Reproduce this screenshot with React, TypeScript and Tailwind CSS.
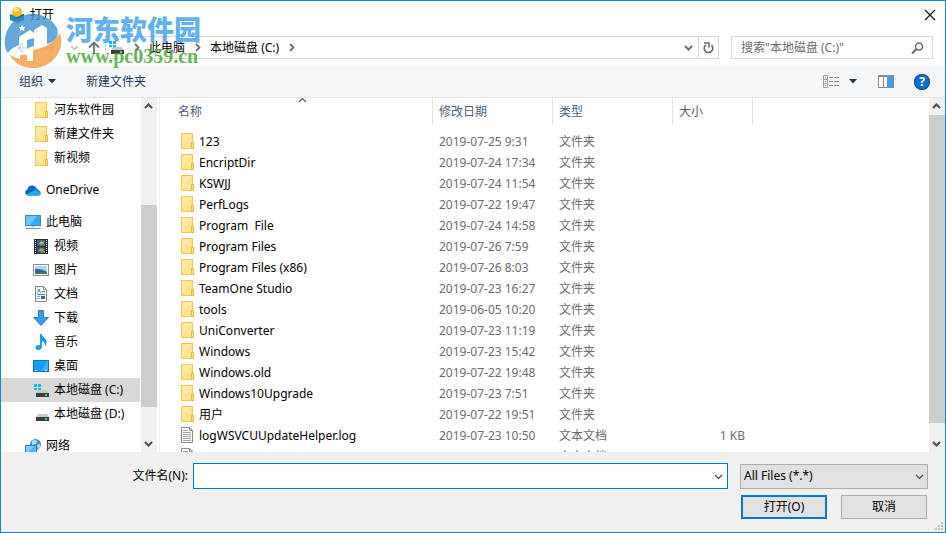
import { useState } from "react";
import type { ReactNode } from "react";

type IconProps = { className?: string };

function Folder() {
  return (
    <svg viewBox="0 0 13 16" className="h-4 w-[13px] shrink-0" aria-hidden="true">
      <rect x="0.5" y="0.5" width="11" height="15" fill="#ffe48f" stroke="#efc94f" />
      <path d="M1 1h10L1 13z" fill="#ffe9a3" />
      <rect x="10.5" y="9.5" width="2" height="6" fill="#ffe08a" stroke="#e9bd3c" />
    </svg>
  );
}

function TextFile() {
  return (
    <svg viewBox="0 0 13 16" className="h-4 w-[13px] shrink-0" aria-hidden="true">
      <path d="M0.5 0.5h8l3 3v12h-11z" fill="#fff" stroke="#8a8a8a" />
      <path d="M8.5 0.5v3h3" fill="none" stroke="#8a8a8a" />
      <path d="M2 3.5h5M2 5.5h8M2 7.5h8M2 9.5h8M2 11.5h8M2 13.5h8" stroke="#a4a4a4" />
    </svg>
  );
}

function OneDrive() {
  return (
    <svg viewBox="0 0 16 11" className="h-[11px] w-4" aria-hidden="true">
      <path d="M3 10.500A3 3 0 0 1 2.500 4.600 4.800 4.800 0 0 1 11.500 3 L9 8z" fill="#0f64b8" />
      <path d="M11 3.200a3.800 3.800 0 0 1 3 2.300A2.600 2.600 0 0 1 13.500 10.500H3.500z" fill="#1490df" />
      <path d="M1 9.500 Q2 10.800 4 10.800h9.500q2 0 2.400-2L9.500 5.200z" fill="#28a8ea" />
    </svg>
  );
}

function Computer() {
  return (
    <svg viewBox="0 0 16 15" className="h-[15px] w-4" aria-hidden="true">
      <rect x="0.500" y="0.500" width="15" height="10" fill="#35abf7" stroke="#4287b4" />
      <path d="M1 1h11L5 10H1z" fill="#68c8ff" />
      <path d="M6 11.500h4" stroke="#b9c9d4" />
      <path d="M0.500 13.500h15" stroke="#7793a8" />
    </svg>
  );
}

function Video() {
  return (
    <svg viewBox="0 0 14 15" className="h-[15px] w-[14px]" aria-hidden="true">
      <rect width="14" height="15" fill="#2c2c2c" />
      <path d="M1.500 1v14M12.500 1v14" stroke="#e8e8e8" strokeDasharray="1 1" />
      <rect x="3" y="1" width="8" height="6" fill="#3167b7" />
      <rect x="3" y="8" width="8" height="6" fill="#28539c" />
      <path d="M5 5l2-3 3 1-1 3z" fill="#e9ad1e" />
      <path d="M6 6l4-2v3H6z" fill="#55933a" />
      <path d="M4 12l3-3 3 1-1 3z" fill="#d9912b" />
      <path d="M7 12h4v2H6z" fill="#4d9c45" />
    </svg>
  );
}

function Picture() {
  return (
    <svg viewBox="0 0 16 12" className="h-3 w-4" aria-hidden="true">
      <rect x="0.500" y="0.500" width="15" height="11" fill="#fff" stroke="#8c8c8c" />
      <rect x="2" y="2" width="12" height="8" fill="#a9d8f5" />
      <path d="M2 5q4-1 12 3v2H2z" fill="#33668c" />
      <path d="M2 8h12v2H2z" fill="#3b7a6a" />
    </svg>
  );
}

function Document() {
  return (
    <svg viewBox="0 0 12 16" className="h-4 w-3" aria-hidden="true">
      <path d="M0.500 0.500h8l3 3v12h-11z" fill="#fff" stroke="#8a8a8a" />
      <path d="M8.500 0.500v3h3" fill="none" stroke="#8a8a8a" />
      <path d="M2.500 7l1.500-4 1.500 4M7 5.500h3M2 8.500h8" fill="none" stroke="#3389c9" />
      <path d="M2 10.500h3M2 12.500h3" stroke="#6ca9d6" />
      <rect x="6" y="10" width="4" height="3" fill="#31688f" />
    </svg>
  );
}

function Download() {
  return (
    <svg viewBox="0 0 16 16" className="size-4" aria-hidden="true">
      <path d="M5.500 0.500h5v7h5L8 15.500 0.500 7.500h5z" fill="#3d9ae8" stroke="#2d7cc4" />
    </svg>
  );
}

function Music() {
  return (
    <svg viewBox="0 0 12 16" className="h-4 w-3" aria-hidden="true">
      <path d="M5 0h1.800c0 3 4.700 4 4.700 8 0 1.500-.5 3-1.500 4 .4-3-1-4.500-3.200-5v6c0 1.800-1.600 3-3.600 3S0.500 15 0.500 13.600 2 11 3.700 11q.8 0 1.300.3z" fill="#149bf0" />
    </svg>
  );
}

function Desktop() {
  return (
    <svg viewBox="0 0 16 12" className="h-3 w-4" aria-hidden="true">
      <rect x="0.500" y="0.500" width="15" height="11" fill="#149dfc" stroke="#1572b4" />
      <path d="M9 10L14 1h1v9z" fill="#3db2ff" />
      <path d="M2 10.500h2M12 10.500h2" stroke="#d6efff" />
    </svg>
  );
}

function Drive({ system = false }: { system?: boolean }) {
  return (
    <svg viewBox="0 0 15 13" className="h-[13px] w-[15px]" aria-hidden="true">
      {system && <path d="M0 0h3v3H0zM4 0h3v3H4zM0 4h3v2H0zM4 4h3v2H4z" fill="#12b5f0" />}
      <path d="M4 6h9l2 3H2z" fill="#c9c9c9" />
      <rect x="2" y="9" width="13" height="4" fill="#3c3c3c" />
      <rect x="11" y="10" width="2" height="2" fill="#3fe03f" />
    </svg>
  );
}

function Network() {
  return (
    <svg viewBox="0 0 16 15" className="h-[15px] w-4" aria-hidden="true">
      <circle cx="10.500" cy="5.500" r="5.500" fill="#4f8fb8" />
      <path d="M7 2q3-2 5 0l-1 3-4 1zM12 6l3-1q1 3-2 5z" fill="#b5dcef" />
      <rect x="0.500" y="6.500" width="11" height="8" fill="#4bb7fa" stroke="#2e80b8" />
      <path d="M1 7h8l-6 7H1z" fill="#80d0ff" />
    </svg>
  );
}

function Chevron({ dir, className = "" }: IconProps & { dir: "up" | "down" | "right" }) {
  const d = { up: "M1 6l3.500-3.500L8 6", down: "M1 3l3.500 3.500L8 3", right: "M3 1l3.500 3.500L3 8" }[dir];
  return (
    <svg viewBox="0 0 9 9" className={`size-[9px] shrink-0 ${className}`} aria-hidden="true">
      <path d={d} fill="none" stroke="currentColor" strokeWidth="var(--sw, 1.8)" />
    </svg>
  );
}

function AppIcon() {
  return (
    <svg viewBox="0 0 14 16" className="h-4 w-[14px]" aria-hidden="true">
      <path d="M0 7l7 2 7-2v6l-7 3-7-3z" fill="#1687b8" />
      <path d="M7 9l7-2v6l-7 3z" fill="#0d668f" />
      <circle cx="7" cy="5" r="5" fill="#f1bd18" />
      <ellipse cx="6" cy="3" rx="3" ry="2" fill="#ffe88a" />
    </svg>
  );
}

function Watermark() {
  return (
    <div className="pointer-events-none absolute top-[10px] left-[3px] flex" aria-hidden="true">
      <svg viewBox="4 10 58 58" className="size-[58px] opacity-80">
        <path d="M5 45A28 28 0 0 1 57 27Q59 33 56 38Q52 42 47 43V27L42 24 34 29V32L30 29 19 36V44Q11 47 8 52Q5 49 5 45Z" fill="#3b93d0" />
        <path d="M9 53Q14 57 20 58V54H27V60H33V49Q52 46 60 32Q65 48 52 60Q43 68 30 67Q15 65 9 53Z" fill="#f59a3c" />
        <path d="M27 39L34 37V45L27 47Z" fill="#3b93d0" />
        <path d="M22 24l1.200 2 2.300.3-1.700 1.600.5 2.200-2.300-1-2 1 .4-2.200-1.600-1.600 2.200-.3z" fill="#fff" />
      </svg>
      <div className="ml-1 flex flex-col whitespace-nowrap">
        <span className="mt-[3px] font-['Noto_Sans_CJK_SC',sans-serif] text-[27px] leading-[30px] font-black text-[#3ba0ee] opacity-80">河东软件园</span>
        <span className="font-['Liberation_Serif',serif] text-[20px] leading-[24px] font-bold text-[#3fa535] opacity-80">www.pc0359.cn</span>
      </div>
    </div>
  );
}

function ScrollBar({ thumb, className = "" }: { thumb: ReactNode; className?: string }) {
  return (
    <div className={`flex w-4 shrink-0 flex-col bg-[#f0f0f0] text-[#505050] ${className}`}>
      <button type="button" aria-label="向上滚动" className="flex h-[17px] items-center justify-center pr-px">
        <Chevron dir="up" className="[--sw:2.2]" />
      </button>
      <div className="flex min-h-0 flex-1 flex-col">{thumb}</div>
      <button type="button" aria-label="向下滚动" className="flex h-[17px] items-center justify-center pr-px">
        <Chevron dir="down" className="[--sw:2.2]" />
      </button>
    </div>
  );
}

type NavItem = { label: string; icon: ReactNode; level: 1 | 2; gap?: boolean };

const navItems: NavItem[] = [
  { label: "河东软件园", icon: <Folder />, level: 2 },
  { label: "新建文件夹", icon: <Folder />, level: 2 },
  { label: "新视频", icon: <Folder />, level: 2 },
  { label: "OneDrive", icon: <OneDrive />, level: 1, gap: true },
  { label: "此电脑", icon: <Computer />, level: 1, gap: true },
  { label: "视频", icon: <Video />, level: 2 },
  { label: "图片", icon: <Picture />, level: 2 },
  { label: "文档", icon: <Document />, level: 2 },
  { label: "下载", icon: <Download />, level: 2 },
  { label: "音乐", icon: <Music />, level: 2 },
  { label: "桌面", icon: <Desktop />, level: 2 },
  { label: "本地磁盘 (C:)", icon: <Drive system />, level: 2 },
  { label: "本地磁盘 (D:)", icon: <Drive />, level: 2 },
  { label: "网络", icon: <Network />, level: 1, gap: true },
];

const files: [string, string, string, string][] = [
  ["123", "2019-07-25 9:31", "文件夹", ""],
  ["EncriptDir", "2019-07-24 17:34", "文件夹", ""],
  ["KSWJJ", "2019-07-24 11:54", "文件夹", ""],
  ["PerfLogs", "2019-07-22 19:47", "文件夹", ""],
  ["Program  File", "2019-07-24 14:58", "文件夹", ""],
  ["Program Files", "2019-07-26 7:59", "文件夹", ""],
  ["Program Files (x86)", "2019-07-26 8:03", "文件夹", ""],
  ["TeamOne Studio", "2019-07-23 16:27", "文件夹", ""],
  ["tools", "2019-06-05 10:20", "文件夹", ""],
  ["UniConverter", "2019-07-23 11:19", "文件夹", ""],
  ["Windows", "2019-07-23 15:42", "文件夹", ""],
  ["Windows.old", "2019-07-22 19:48", "文件夹", ""],
  ["Windows10Upgrade", "2019-07-23 7:51", "文件夹", ""],
  ["用户", "2019-07-22 19:51", "文件夹", ""],
  ["logWSVCUUpdateHelper.log", "2019-07-23 10:50", "文本文档", "1 KB"],
  ["", "", "文本文档", ""],
];

const columns = ["修改日期", "类型", "大小"];

export default function App() {
  const [current, setCurrent] = useState("本地磁盘 (C:)");
  const [fileName, setFileName] = useState("");

  return (
    <div className="relative flex h-screen flex-col overflow-hidden border border-[#1883d7] bg-white font-['Noto_Sans','Noto_Sans_CJK_SC',sans-serif] text-[12px] leading-4 text-black">
      <header className="flex h-7 shrink-0 items-center px-[9px]">
        <AppIcon />
        <h1 className="ml-[6px]">打开</h1>
        <button type="button" aria-label="关闭" className="ml-auto">
          <svg viewBox="0 0 12 12" className="size-3" aria-hidden="true">
            <path d="M1 1l10 10M11 1L1 11" stroke="#111" strokeWidth="1.200" />
          </svg>
        </button>
      </header>

      <nav aria-label="地址" className="flex h-[37px] shrink-0 items-center pr-3 pl-[15px]">
        <button type="button" aria-label="后退" className="text-[#dcdcdc]">
          <svg viewBox="0 0 14 12" className="h-3 w-[14px]"><path d="M7 1L2 6l5 5M2 6h12" fill="none" stroke="currentColor" strokeWidth="1.500" /></svg>
        </button>
        <button type="button" aria-label="前进" className="ml-3 text-[#dcdcdc]">
          <svg viewBox="0 0 14 12" className="h-3 w-[14px]"><path d="M7 1l5 5-5 5M12 6H0" fill="none" stroke="currentColor" strokeWidth="1.500" /></svg>
        </button>
        <button type="button" aria-label="最近位置" className="ml-[14px] text-[#c8c8c8]"><Chevron dir="down" /></button>
        <button type="button" aria-label="上移" className="ml-2 text-[#707070]">
          <svg viewBox="0 0 14 13" className="h-[13px] w-[14px]"><path d="M2 6.500L7 1.500l5 5M7 2v11" fill="none" stroke="currentColor" strokeWidth="1.800" /></svg>
        </button>
        <div className="ml-1 flex h-[23px] min-w-0 flex-1 items-center border border-[#d9d9d9] pl-[3px]">
          <Drive system />
          <Chevron dir="right" className="ml-2 text-[#707070]" />
          <button type="button" className="ml-2">此电脑</button>
          <Chevron dir="right" className="ml-2 text-[#707070]" />
          <button type="button" className="ml-2">本地磁盘 (C:)</button>
          <Chevron dir="right" className="ml-2 text-[#707070]" />
          <button type="button" aria-label="以前的位置" className="ml-auto flex h-full w-[19px] items-center justify-center text-[#707070]">
            <Chevron dir="down" className="[--sw:2]" />
          </button>
          <button type="button" aria-label="刷新" className="flex h-full w-5 items-center justify-center border-l border-[#d9d9d9] text-[#666]">
            <svg viewBox="0 0 11 12" className="h-3 w-[11px]">
              <path d="M8.500 3.200A4.300 4.300 0 1 1 3 2.800" fill="none" stroke="currentColor" strokeWidth="1.600" />
              <path d="M1 1h5v4.500" fill="none" stroke="currentColor" strokeWidth="1.500" />
            </svg>
          </button>
        </div>
        <div className="ml-3 flex h-[23px] w-[202px] items-center border border-[#d9d9d9] pr-2 pl-[9px]">
          <input type="search" aria-label="搜索" placeholder={'搜索"本地磁盘 (C:)"'} className="min-w-0 flex-1 bg-transparent outline-none placeholder:text-[#6d6d6d]" />
          <svg viewBox="0 0 13 12" className="h-3 w-[13px] text-[#666]" aria-hidden="true">
            <circle cx="8" cy="4.500" r="3.500" fill="none" stroke="currentColor" strokeWidth="1.500" />
            <path d="M5.500 7L1 11.500" stroke="currentColor" strokeWidth="2" />
          </svg>
        </div>
      </nav>

      <div role="toolbar" className="flex h-8 shrink-0 items-center border-b border-[#e3e5e8] bg-[#f5f6f7] pr-[15px] pl-[18px] text-[#1e395b]">
        <button type="button" className="flex items-center">
          组织
          <svg viewBox="0 0 8 5" className="ml-[5px] h-[5px] w-2" aria-hidden="true"><path d="M0 0h8L4 4.500z" fill="currentColor" /></svg>
        </button>
        <button type="button" className="ml-[30px]">新建文件夹</button>
        <button type="button" aria-label="更改视图" className="ml-auto flex items-center">
          <svg viewBox="0 0 16 13" className="h-[13px] w-4" aria-hidden="true">
            <path d="M0.500 0.500h4v12h-4zM0.500 4.500h4M0.500 8.500h4" fill="#fff" stroke="#9a9a9a" />
            <path d="M2 2h1v1H2zM2 10h1v1H2z" fill="#c0392b" />
            <path d="M2 6h1v1H2z" fill="#2d7dd2" />
            <path d="M6 2.500h4M11 2.500h5M6 6.500h4M11 6.500h5M6 10.500h4M11 10.500h5" stroke="#8a8a8a" />
          </svg>
          <svg viewBox="0 0 8 5" className="ml-[10px] h-[5px] w-2" aria-hidden="true"><path d="M0 0h8L4 4.500z" fill="currentColor" /></svg>
        </button>
        <button type="button" aria-label="显示预览窗格" className="ml-[21px]">
          <svg viewBox="0 0 16 13" className="h-[13px] w-4" aria-hidden="true">
            <rect x="0.500" y="0.500" width="15" height="12" fill="#fff" stroke="#8a8a8a" />
            <path d="M0 1h16" stroke="#8a8a8a" strokeWidth="2" />
            <path d="M5.500 2v10" stroke="#8a8a8a" />
            <rect x="9" y="2" width="6" height="10" fill="#3f9ceb" />
          </svg>
        </button>
        <button type="button" aria-label="帮助" className="ml-5 flex size-4 items-center justify-center rounded-full bg-[#0f6fd0] text-[12px] leading-4 font-bold text-white ring-1 ring-[#124f96] ring-inset">
          ?
        </button>
      </div>

      <main className="flex min-h-0 flex-1">
        <ul className="w-[139px] shrink-0 overflow-hidden">
          {navItems.map((item) => (
            <li key={item.label} className={item.gap ? "mt-2" : undefined}>
              <a
                href="#"
                aria-current={item.label === current ? "true" : undefined}
                onClick={(e) => {
                  e.preventDefault();
                  setCurrent(item.label);
                }}
                className={`flex h-6 items-center whitespace-nowrap ${item.level === 1 ? "pl-6" : "pl-8"} ${item.label === current ? "bg-[#d9d9d9]" : ""}`}
              >
                <span className="mr-[5px] flex w-4 shrink-0 justify-center">{item.icon}</span>
                {item.label}
              </a>
            </li>
          ))}
        </ul>
        <ScrollBar
          className="ml-px"
          thumb={
            <>
              <div className="flex-[90]" />
              <div className="flex-[202] bg-[#cdcdcd]" />
              <div className="flex-[28]" />
            </>
          }
        />
        <div className="relative ml-[2px] min-w-0 flex-1 overflow-hidden border-l border-[#f0f0f0]">
          <Chevron dir="up" className="absolute top-[-2px] left-[138px] text-[#606060] [--sw:1.2]" />
          <table className="w-[593px] table-fixed border-collapse text-left text-[#6d6d6d]">
            <colgroup>
              <col className="w-[273px]" />
              <col className="w-[120px]" />
              <col className="w-[120px]" />
              <col className="w-[80px]" />
            </colgroup>
            <thead className="text-[#4c607a]">
              <tr>
                <th scope="col" className="p-0 pb-[6px] font-normal">
                  <div className="flex h-[27px] items-center border-r border-[#e5e5e5] pl-[18px]">名称</div>
                </th>
                {columns.map((c) => (
                  <th key={c} scope="col" className="p-0 pb-[6px] font-normal">
                    <div className="flex h-[27px] items-center border-r border-[#e5e5e5] pl-[6px]">{c}</div>
                  </th>
                ))}
              </tr>
            </thead>
            <tbody>
              {files.map(([name, date, type, size], i) => (
                <tr key={i} className="h-[21px] whitespace-pre">
                  <td className="p-0 pl-[21px]">
                    <div className="flex h-[21px] items-center gap-[5px] text-black">
                      <span className="pb-px">{type === "文件夹" ? <Folder /> : <TextFile />}</span>
                      {name}
                    </div>
                  </td>
                  <td className="p-0 pl-[6px]">{date}</td>
                  <td className="p-0 pl-[6px]">{type}</td>
                  <td className="p-0 pr-2 text-right">{size}</td>
                </tr>
              ))}
            </tbody>
          </table>
        </div>
        <ScrollBar
          thumb={
            <>
              <div className="flex-[308] bg-[#cdcdcd]" />
              <div className="flex-[12]" />
            </>
          }
        />
      </main>

      <footer className="relative flex h-20 shrink-0 flex-col bg-[#f0f0f0] pt-[11px] pr-[17px]">
        <div className="flex items-center">
          <label htmlFor="file-name" className="w-[187px] text-right">文件名(N):</label>
          <div className="ml-[5px] flex h-[26px] flex-1 items-center border border-[#0078d7] bg-white">
            <input id="file-name" value={fileName} onChange={(e) => setFileName(e.target.value)} className="h-full min-w-0 flex-1 px-1 outline-none" />
            <button type="button" aria-label="历史记录" className="flex h-full w-[17px] items-center justify-center text-[#444]">
              <Chevron dir="down" className="[--sw:1.2]" />
            </button>
          </div>
          <div className="relative ml-3 w-[188px]">
            <select aria-label="文件类型" className="block h-[25px] w-full appearance-none border border-[#adadad] bg-[#e1e1e1] pl-[3px]">
              <option>All Files (*.*)</option>
            </select>
            <Chevron dir="down" className="pointer-events-none absolute top-2 right-1 text-[#444] [--sw:1.2]" />
          </div>
        </div>
        <div className="mt-[6px] flex justify-end gap-[14px] pr-px">
          <button type="button" className="h-6 w-[86px] border-2 border-[#0078d7] bg-[#e1e1e1]">打开(O)</button>
          <button type="button" className="h-6 w-[86px] border border-[#adadad] bg-[#e1e1e1]">取消</button>
        </div>
        <svg viewBox="0 0 8 8" className="absolute right-[2px] bottom-[2px] size-2" aria-hidden="true">
          <path d="M6 0h2v2H6zM3 3h2v2H3zM6 3h2v2H6zM0 6h2v2H0zM3 6h2v2H3zM6 6h2v2H6z" fill="#bfbfbf" />
        </svg>
      </footer>

      <Watermark />
    </div>
  );
}
